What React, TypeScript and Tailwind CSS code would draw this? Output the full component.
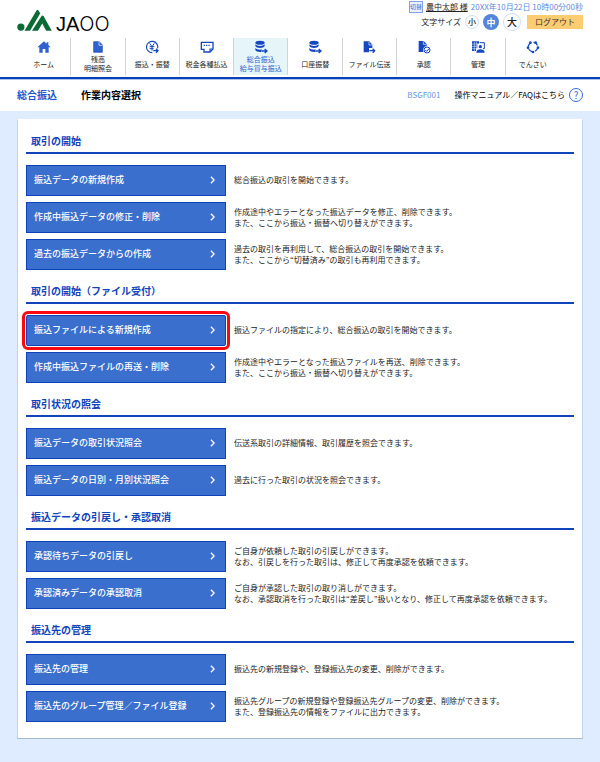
import { ReactNode } from 'react';

const BLUE = '#1547c0';

interface NavItem {
  lines: string[];
  icon: ReactNode;
  active?: boolean;
}

interface Task {
  label: string;
  desc: string[];
  marked?: boolean;
}

interface Section {
  title: string;
  tasks: Task[];
}

function Icon({ children }: { children: ReactNode }) {
  return (
    <svg viewBox="0 0 42 42" className="h-3.5 w-3.5" fill="none" stroke={BLUE} strokeWidth="4" aria-hidden="true">
      {children}
    </svg>
  );
}

const DATABASE = (
  <Icon>
    <g fill={BLUE} stroke="none">
      <ellipse cx="18" cy="8" rx="14" ry="6" />
      <path d="M4 13c3 4 8 5 14 5s11-1 14-5v5c-1 4-8 6-14 6S5 22 4 18z" />
      <path d="M4 24c3 4 8 5 14 5 2 0 3 0 5-1v7c-2 1-3 1-5 1-6 0-13-2-14-6z" />
    </g>
    <path d="M24 33h14M32 27l7 6-7 6" />
  </Icon>
);

const NAV: NavItem[] = [
  {
    lines: ['ホーム'],
    icon: (
      <Icon>
        <path d="M21 4 1 22h6v16h10V27h8v11h10V22h6L34 15V7h-5v4z" fill="#2f62cf" stroke="none" />
      </Icon>
    ),
  },
  {
    lines: ['残高', '明細照会'],
    icon: (
      <Icon>
        <path d="M8 5h17l9 10v22H8z" fill="#2f62cf" strokeWidth="2" />
        <path d="M24 5v11h10" stroke="#fff" strokeWidth="2" />
      </Icon>
    ),
  },
  {
    lines: ['振込・振替'],
    icon: (
      <Icon>
        <path d="M22 38A17 17 0 1 1 38 25" strokeWidth="3.5" />
        <path d="m14 10 7 10 7-10M21 20v12M14 20h14M14 26h12" strokeWidth="3" />
        <path d="M25 32h13M33 26l6 6-6 6" />
      </Icon>
    ),
  },
  {
    lines: ['税金各種払込'],
    icon: (
      <Icon>
        <path d="M4 7h35v20l-9 9H12V28H4z" strokeWidth="4" />
        <path d="M11 16h4M18 16h4M25 16h4M30 35v-8h8" strokeWidth="3.5" />
      </Icon>
    ),
  },
  { lines: ['総合振込', '給与賞与振込'], icon: DATABASE, active: true },
  { lines: ['口座振替'], icon: DATABASE },
  {
    lines: ['ファイル伝送'],
    icon: (
      <Icon>
        <path d="M5 4h17l9 10v10H21v13H5z" fill={BLUE} stroke="none" />
        <path d="M21 5v10h10" stroke="#fff" strokeWidth="2" />
        <path d="M22 32h15M32 26l6 6-6 6" />
      </Icon>
    ),
  },
  {
    lines: ['承認'],
    icon: (
      <Icon>
        <path d="M5 3h15l9 9v6c-8 1-12 8-10 18H5z" fill={BLUE} stroke="none" />
        <path d="M19 4v9h9" stroke="#fff" strokeWidth="2" />
        <circle cx="30" cy="30" r="9" strokeWidth="3" />
        <path d="m25 30 4 4 7-8" strokeWidth="3" />
      </Icon>
    ),
  },
  {
    lines: ['管理'],
    icon: (
      <Icon>
        <path d="M3 4h21v7h-5v14h-4v8H3z" fill={BLUE} stroke="none" />
        <path d="M10 5v29M16 5v20M3 12h20M3 19h15M3 26h13" stroke="#fff" strokeWidth="1.5" />
        <path d="M26 8h14v18h-4" strokeWidth="3" />
        <circle cx="28" cy="20" r="5" fill={BLUE} stroke="none" />
        <path d="M16 38c0-7 5-10 12-10s13 3 13 10z" fill={BLUE} stroke="none" />
      </Icon>
    ),
  },
  {
    lines: ['でんさい'],
    icon: (
      <Icon>
        <circle cx="21" cy="21" r="14" strokeWidth="3.5" strokeDasharray="15 7" />
        <g fill={BLUE} stroke="none">
          <circle cx="13" cy="8" r="4" />
          <circle cx="29" cy="8" r="4" />
          <circle cx="6" cy="23" r="4" />
          <circle cx="36" cy="23" r="4" />
          <circle cx="21" cy="36" r="4" />
        </g>
      </Icon>
    ),
  },
];

const SECTIONS: Section[] = [
  {
    title: '取引の開始',
    tasks: [
      { label: '振込データの新規作成', desc: ['総合振込の取引を開始できます。'] },
      {
        label: '作成中振込データの修正・削除',
        desc: ['作成途中やエラーとなった振込データを修正、削除できます。', 'また、ここから振込・振替へ切り替えができます。'],
      },
      {
        label: '過去の振込データからの作成',
        desc: ['過去の取引を再利用して、総合振込の取引を開始できます。', 'また、ここから“切替済み”の取引も再利用できます。'],
      },
    ],
  },
  {
    title: '取引の開始（ファイル受付）',
    tasks: [
      {
        label: '振込ファイルによる新規作成',
        desc: ['振込ファイルの指定により、総合振込の取引を開始できます。'],
        marked: true,
      },
      {
        label: '作成中振込ファイルの再送・削除',
        desc: ['作成途中やエラーとなった振込ファイルを再送、削除できます。', 'また、ここから振込・振替へ切り替えができます。'],
      },
    ],
  },
  {
    title: '取引状況の照会',
    tasks: [
      { label: '振込データの取引状況照会', desc: ['伝送系取引の詳細情報、取引履歴を照会できます。'] },
      { label: '振込データの日別・月別状況照会', desc: ['過去に行った取引の状況を照会できます。'] },
    ],
  },
  {
    title: '振込データの引戻し・承認取消',
    tasks: [
      {
        label: '承認待ちデータの引戻し',
        desc: ['ご自身が依頼した取引の引戻しができます。', 'なお、引戻しを行った取引は、修正して再度承認を依頼できます。'],
      },
      {
        label: '承認済みデータの承認取消',
        desc: ['ご自身が承認した取引の取り消しができます。', 'なお、承認取消を行った取引は“差戻し”扱いとなり、修正して再度承認を依頼できます。'],
      },
    ],
  },
  {
    title: '振込先の管理',
    tasks: [
      { label: '振込先の管理', desc: ['振込先の新規登録や、登録振込先の変更、削除ができます。'] },
      {
        label: '振込先のグループ管理／ファイル登録',
        desc: ['振込先グループの新規登録や登録振込先グループの変更、削除ができます。', 'また、登録振込先の情報をファイルに出力できます。'],
      },
    ],
  },
];

function Logo() {
  return (
    <div className="flex items-end gap-1 pb-0.5">
      <svg viewBox="0 0 105 64" className="mb-[5px] h-[21px] w-[35px]" fill="#0a6b35" aria-hidden="true">
        <circle cx="11" cy="52" r="11" />
        <path d="M22 63 59 1q3-3 6 1l5 8L39 63z" />
        <path d="M45 63 74 18q3-3 6 0l25 45H88L76 41 63 63z" />
      </svg>
      <span className="font-['Liberation_Sans',sans-serif] text-xl leading-6 text-black">
        JA<span className="font-['Inter',sans-serif] font-light">OO</span>
      </span>
    </div>
  );
}

function Header() {
  return (
    <header className="flex h-[38px] justify-between px-[17px]">
      <Logo />
      <div className="flex flex-col items-end">
        <div className="flex h-[13px] items-center gap-[3px]">
          <button className="flex h-3 w-3.5 items-center justify-center border border-[#7ea3e6] bg-[#eaf2ff] text-[6px] leading-none whitespace-nowrap text-[#2f62cf]">
            切替
          </button>
          <a href="#user" className="underline">農中太郎 様</a>
          <span className="text-[#5d8be0]">20XX年10月22日 10時00分00秒</span>
        </div>
        <div className="flex h-[18px] items-center">
          <span className="mr-1">文字サイズ</span>
          <button className="mr-1 h-3.5 w-3.5 rounded-full border border-[#c9def8] leading-none font-medium">小</button>
          <button className="mr-1 h-4 w-4 rounded-full bg-[#5585d9] text-[9px] leading-none font-bold text-white">中</button>
          <button className="mr-1.5 h-[18px] w-[18px] rounded-full border border-[#c9def8] text-[10px] leading-none font-medium">大</button>
          <button className="h-3.5 bg-[#fccc73] px-2 leading-none text-[#333]">ログアウト</button>
        </div>
      </div>
    </header>
  );
}

function Nav() {
  return (
    <nav className="border-b-2 border-[#0b3fb8] pb-0.5 pl-[17px] pr-10">
      <ul className="grid grid-cols-10">
        {NAV.map((item) => (
          <li key={item.lines[0]} className="border-r border-[#d4d4d4] last:border-r-0">
            <a
              href="#menu"
              className={`flex h-[37px] flex-col items-center gap-px pt-0.5 text-[7px] leading-[9px] whitespace-nowrap ${
                item.active ? 'bg-[#e6f6f8] text-[#2f62cf]' : 'text-[#222]'
              }`}
            >
              {item.icon}
              <span className="flex h-[18px] flex-col items-center justify-center">
                {item.lines.map((line) => (
                  <span key={line}>{line}</span>
                ))}
              </span>
            </a>
          </li>
        ))}
      </ul>
    </nav>
  );
}

function TaskRow({ task }: { task: Task }) {
  return (
    <div className="flex items-center gap-2">
      <button
        className={`flex h-[31px] w-[200px] shrink-0 items-center justify-between border border-[#0f42b8] bg-[#3b6fcd] pb-0.5 pl-[7px] pr-2.5 text-[9px] font-medium text-white ${
          task.marked ? 'rounded-[2px] outline-3 outline-offset-1 outline-[#fa0a10]' : ''
        }`}
      >
        {task.label}
        <svg viewBox="0 0 6 10" className="h-2 w-[5px]" fill="none" stroke="#fff" strokeWidth="1.6" aria-hidden="true">
          <path d="m1 1 4 4-4 4" />
        </svg>
      </button>
      <p className="pb-0.5 leading-[11px]">
        {task.desc.map((line) => (
          <span key={line} className="block">{line}</span>
        ))}
      </p>
    </div>
  );
}

export default function App() {
  return (
    <div className="min-h-screen bg-[#dfebff] font-['Noto_Sans_CJK_JP',sans-serif] text-[8px] text-[#222]">
      <div className="bg-white">
        <Header />
        <Nav />

        {/* Page title */}
        <div className="flex h-8 items-center border-t border-[#a9c4f0] px-[17px] pb-0.5">
          <span className="mr-6 text-[10px] font-bold text-[#1c57cf]">総合振込</span>
          <h1 className="text-[10px] font-bold text-black">作業内容選択</h1>
          <span className="ml-auto mr-3.5 text-[#6b95e4]">BSGF001</span>
          <a href="#faq" className="flex items-center gap-1 text-black">
            操作マニュアル／FAQはこちら
            <span className="flex h-3.5 w-3.5 items-center justify-center rounded-full border border-[#3569d2] text-[10px] leading-none text-[#3569d2]">
              ?
            </span>
          </a>
        </div>
      </div>

      <main className="px-[17px] pt-2 pb-[23px]">
        <div className="flex flex-col gap-[13px] border border-[#bfd3ee] border-t-white border-b-[#a9bbd2] bg-white px-2 pt-[13px] pb-4">
          {SECTIONS.map((section) => (
            <section key={section.title}>
              <h2 className="mb-[11px] border-b-2 border-[#1243ba] pb-[3px] pl-[5px] text-[10px] leading-4 font-bold text-[#1243ba]">
                {section.title}
              </h2>
              <div className="flex flex-col gap-1.5">
                {section.tasks.map((task) => (
                  <TaskRow key={task.label} task={task} />
                ))}
              </div>
            </section>
          ))}
        </div>
      </main>
    </div>
  );
}
